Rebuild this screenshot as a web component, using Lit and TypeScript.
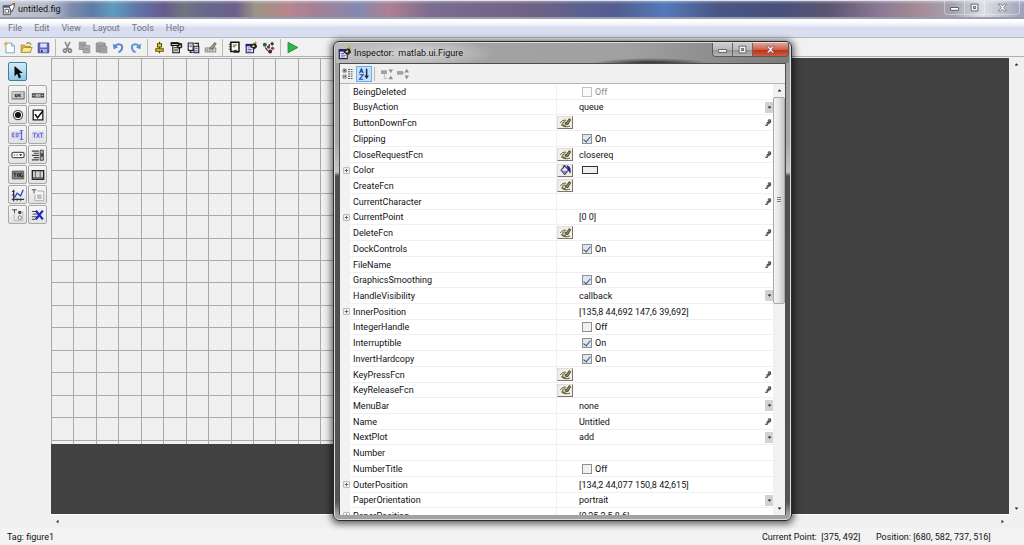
import { LitElement, html, svg, css, nothing, TemplateResult } from "lit";
import { customElement, property } from "lit/decorators.js";

type Kind = "check" | "choice" | "text" | "static" | "color" | "empty";

interface Prop {
  name: string;
  kind: Kind;
  value?: string;
  checked?: boolean;
  disabled?: boolean;
  expand?: boolean;
  button?: "pen" | "paint";
}

const PROPS: Prop[] = [
  { name: "BeingDeleted", kind: "check", checked: false, disabled: true },
  { name: "BusyAction", kind: "choice", value: "queue" },
  { name: "ButtonDownFcn", kind: "text", value: "", button: "pen" },
  { name: "Clipping", kind: "check", checked: true },
  { name: "CloseRequestFcn", kind: "text", value: "closereq", button: "pen" },
  { name: "Color", kind: "color", expand: true, button: "paint" },
  { name: "CreateFcn", kind: "text", value: "", button: "pen" },
  { name: "CurrentCharacter", kind: "text", value: "" },
  { name: "CurrentPoint", kind: "static", value: "[0 0]", expand: true },
  { name: "DeleteFcn", kind: "text", value: "", button: "pen" },
  { name: "DockControls", kind: "check", checked: true },
  { name: "FileName", kind: "text", value: "" },
  { name: "GraphicsSmoothing", kind: "check", checked: true },
  { name: "HandleVisibility", kind: "choice", value: "callback" },
  { name: "InnerPosition", kind: "static", value: "[135,8 44,692 147,6 39,692]", expand: true },
  { name: "IntegerHandle", kind: "check", checked: false },
  { name: "Interruptible", kind: "check", checked: true },
  { name: "InvertHardcopy", kind: "check", checked: true },
  { name: "KeyPressFcn", kind: "text", value: "", button: "pen" },
  { name: "KeyReleaseFcn", kind: "text", value: "", button: "pen" },
  { name: "MenuBar", kind: "choice", value: "none" },
  { name: "Name", kind: "text", value: "Untitled" },
  { name: "NextPlot", kind: "choice", value: "add" },
  { name: "Number", kind: "empty" },
  { name: "NumberTitle", kind: "check", checked: false },
  { name: "OuterPosition", kind: "static", value: "[134,2 44,077 150,8 42,615]", expand: true },
  { name: "PaperOrientation", kind: "choice", value: "portrait" },
  { name: "PaperPosition", kind: "static", value: "[0,25 2,5 8 6]", expand: true },
];

const inspectorGlyph = svg`
  <path d="M1.500 4.500h9v10h-9z" fill="#fff" stroke="#23235a" stroke-width="1.400"/>
  <path d="M1 3.500h8v3H1z" fill="#23236e"/>
  <path d="M3 8.500h4M3 10.500h6M3 12.500h5" stroke="#4a4a9c"/>
  <path d="M6 7l4-4 3-1 2 5-3 3-3-1z" fill="#222"/>
  <path d="M8 7l3-2.500 1 3z" fill="#f2e6a0"/>
  <path d="M11 3l2-3 2 3z" fill="#d8a800"/>`;

const ICONS: Record<string, TemplateResult> = {
  figure: svg`
    <path d="M1.500 4.500h8v10h-8z" fill="#e8ecf4" stroke="#3b3f52"/>
    <path d="M1 4h9v2.500H1z" fill="#4d557c"/>
    <path d="M3.500 8.500h4v4h-4z" fill="#fff" stroke="#555"/>
    <path d="M8 5l6-3.500v4l-3 6z" fill="#fff" stroke="#444"/>
    <path d="M12 1.500l3-.500-1 4z" fill="#b65a3a"/>`,
  newFile: svg`
    <path d="M3.500 2.500h7l3.500 3.500v8.500h-10.500z" fill="#fbfdff" stroke="#6e93bd"/>
    <path d="M10.500 2.500v3.500h3.500" fill="#d6e6f7" stroke="#6e93bd"/>
    <path d="M3.500 0l1 2.500L7 3.500 4.500 4.500l-1 2.500-1-2.500L0 3.500l2.500-1z" fill="#f0a646"/>`,
  open: svg`
    <path d="M1.500 14v-9h4l1 1.500h6.500V14z" fill="#e2be48" stroke="#a8842a"/>
    <path d="M1.500 14l2.500-6h11l-2.500 6z" fill="#fbe98c" stroke="#a8842a"/>
    <path d="M8 3.500c2-2.500 4.500-1.500 5.500 1" fill="none" stroke="#7d8f4b" stroke-width="1.500"/>`,
  save: svg`
    <path d="M1.500 2.500h13v12h-13z" fill="#6066c4" stroke="#34388c"/>
    <path d="M4 3h8v5H4z" fill="#dfe2f8"/>
    <path d="M4 10h8v4H4z" fill="#b8bce0"/><path d="M5 11h2v3H5z" fill="#2c307c"/>`,
  cut: svg`
    <path d="M5 1l4.500 9.500M11 1L6.500 10.500" stroke="#8d8d8d" stroke-width="2"/>
    <circle cx="5" cy="12" r="2" fill="none" stroke="#858585" stroke-width="2"/>
    <circle cx="11" cy="12" r="2" fill="none" stroke="#858585" stroke-width="2"/>`,
  copy: svg`
    <path d="M1.500 1.500h8v9h-8z" fill="#a9a9a9" stroke="#8a8a8a"/>
    <path d="M6.500 5.500h8v9h-8z" fill="#b4b4b4" stroke="#8a8a8a"/>
    <path d="M8 9h5M8 11h5M3 4h5M3 6h3" stroke="#8a8a8a"/>`,
  paste: svg`
    <path d="M1.500 2.500h11v11h-11z" fill="#999" stroke="#8a8a8a"/>
    <path d="M4 1h6v3H4z" fill="#a8a8a8"/>
    <path d="M6.500 6.500h8v8h-8z" fill="#a9a9a9" stroke="#8a8a8a"/><path d="M8 9h5M8 11h5" stroke="#8f8f8f"/>`,
  undo: svg`
    <path d="M3 7c4-5 10-3 9.500 1-.300 3-2 5-4.500 6" fill="none" stroke="#5b86d2" stroke-width="2.400"/>
    <path d="M1 3l1 7 5.500-2z" fill="#5b86d2"/>`,
  redo: svg`
    <path d="M13 7c-4-5-10-3-9.500 1 .300 3 2 5 4.500 6" fill="none" stroke="#5b93da" stroke-width="2.400"/>
    <path d="M15 3l-1 7-5.500-2z" fill="#5b93da"/>`,
  align: svg`
    <path d="M8 1v14" stroke="#4a4300" stroke-width="1.500"/>
    <path d="M5.500 3.500h5v4h-5zM3.500 9.500h9v3h-9z" fill="#f0d428" stroke="#5b5100" stroke-width="1.300"/>`,
  menuEditor: svg`
    <path d="M1.500 2.500h9v3h-9zM3.500 5.500h8v9h-8z" fill="#fff" stroke="#111" stroke-width="1.400"/>
    <path d="M1 1.500h9v2.500H1z" fill="#111"/>
    <path d="M5 8h5M5 10h5M5 12h5" stroke="#222"/>
    <path d="M8 7l3.500-5 3.500 1v5l-4 2z" fill="#222"/><path d="M10 7l3-2.500v3z" fill="#eee"/>`,
  tabOrder: svg`
    <path d="M1.500 2.500h6v9h-6z" fill="#fff" stroke="#222" stroke-width="1.400"/>
    <path d="M8.500 6.500h6v8h-6z" fill="#dfe4ff" stroke="#222" stroke-width="1.400"/>
    <path d="M3 5h3M3 7h3M10 9h3M10 12h3" stroke="#33338a"/>
    <path d="M9 3h5v3M4 12v2h3" fill="none" stroke="#222" stroke-width="1.500"/>`,
  toolbarEditor: svg`
    <path d="M1.500 8.500h13v5h-13z" fill="#d3d3c5" stroke="#777"/>
    <path d="M4 10v2M7 10v2M10 10v2" stroke="#555"/>
    <path d="M7 9l6-7 2 1-4 7z" fill="#9a987c" stroke="#66644c"/>`,
  mfile: svg`
    <path d="M3.500 1.500h10v11.500h-10z" fill="#fdf9e4" stroke="#111" stroke-width="1.800"/>
    <path d="M1 4h3M1 7h3M1 10h3" stroke="#111"/>
    <path d="M6 5h5M6 7h3" stroke="#444"/>
    <path d="M7 14c0-4 3-4 4-1.500l3 2H7z" fill="#222"/>`,
  inspector: inspectorGlyph,
  browser: svg`
    <circle cx="3.500" cy="4.500" r="2.500" fill="#1f6d3a"/><circle cx="10" cy="13" r="2.500" fill="#3a2a3a"/>
    <path d="M12.500 1l2.500 2.500L12.500 6 10 3.500z" fill="#1d4d2b"/><circle cx="13" cy="9" r="2" fill="#b02a58"/>
    <circle cx="8" cy="7.500" r="2" fill="#7a2a5a"/><path d="M4 8l3 4M9 4v2" stroke="#222" stroke-width="1.500"/>`,
  run: svg`<path d="M2.500 1.500l12 6.500-12 6.500z" fill="#35b24a" stroke="#1c8431"/>`,
  select: svg`<path d="M4 1v12l3-3 2 5 2.500-1-2-5h4z" fill="#0a0a0a"/>`,
  push: svg`
    <path d="M1 4h14v9H1z" fill="#d0d0d0"/><path d="M1 13V4h14" fill="none" stroke="#999"/>
    <path d="M1 12.500h14V4" fill="none" stroke="#555"/>
    <path d="M4 6.500h8v4H4z" fill="#aaa"/><path d="M5 7v3h2V7M9 7v3M11 7L9 8.500l2 1.500" fill="none" stroke="#222"/>`,
  slider: svg`
    <path d="M1 6h14v5H1z" fill="#4a4a4a"/><path d="M5 7h6v3H5z" fill="#b5b5b5"/>
    <path d="M2 8.500h2M12 8.500h2" stroke="#ddd"/>`,
  radio: svg`
    <circle cx="8" cy="8" r="5.300" fill="#fff" stroke="#555" stroke-width="1.300"/>
    <circle cx="8" cy="8" r="3.500" fill="#111"/>`,
  checkbox: svg`
    <path d="M2.500 2.500h11v11h-11z" fill="#fff" stroke="#222" stroke-width="1.500"/>
    <path d="M4.500 7l3 4L13.500 3.500" fill="none" stroke="#111" stroke-width="1.800"/>`,
  edit: svg`
    <path d="M0 4h13v8H0z" fill="#d5d5f2"/>
    <path d="M4 6H1.500v4H4M1.500 8h2M6 6v4h2V6zM9 6h4" fill="none" stroke="#6b6bc6"/>
    <path d="M10 3h4M12 3v10M10 13h4" stroke="#5151c4"/>`,
  text: svg`
    <path d="M1 4h14v8H1z" fill="#d5d5f2"/>
    <path d="M2 6h4M4 6v5M6.500 6l3 5M9.500 6l-3 5M10 6h4M12 6v5" stroke="#6666cc"/>`,
  popup: svg`
    <rect x="1" y="5" width="14" height="6" rx="2" fill="#fff" stroke="#555" stroke-width="1.400"/>
    <path d="M3 8h2M6 8h2" stroke="#555"/><path d="M9 7h4l-2 2.500z" fill="#222"/>`,
  listbox: svg`
    <path d="M1 3.500h8M3 6h6M1 8.500h8M3 11h6M1 13.500h8" stroke="#444" stroke-width="1.300"/>
    <path d="M10.500 2.500h3.500v11.500h-3.500z" fill="#bbb" stroke="#333"/><path d="M11 6h3v4h-3z" fill="#444"/>`,
  toggle: svg`
    <path d="M1.500 3.500h13v9h-13z" fill="#858585" stroke="#555"/>
    <path d="M3 6h3M4.500 6v4M7.500 6.500h2v3h-2zM13 6h-2v4h2V8" fill="none" stroke="#222"/>`,
  table: svg`
    <path d="M1.500 3h13v10h-13z" fill="#cfcfcf" stroke="#222" stroke-width="1.500"/>
    <path d="M5 3v10M10.500 3v10" stroke="#555"/><path d="M2 10.500h12v2H2z" fill="#666"/>`,
  axes: svg`
    <path d="M3 2v13M1 13h14" stroke="#333" stroke-width="1.500"/>
    <path d="M1 4h3M1 8h3M7 12v3M11 12v3" stroke="#333"/>
    <path d="M4 11l3-5 4 3 3-7" fill="none" stroke="#3a45c8" stroke-width="1.500"/>`,
  panel: svg`
    <path d="M7.500 3.500h7v11h-10v-7" fill="#f6f6f6" stroke="#a5a5a5"/>
    <path d="M1 2h5M3.500 2v4" stroke="#444"/><path d="M7.500 8h4v4h-4z" fill="#ddd" stroke="#aaa"/>
    <path d="M8 8.500l3 3" stroke="#999"/>`,
  buttonGroup: svg`
    <path d="M3.500 7v7.500h10v-11" fill="none" stroke="#b4b4b4"/>
    <path d="M1 2h6M4 2v4" stroke="#333"/>
    <circle cx="10" cy="5" r="2" fill="#444"/><circle cx="10" cy="11" r="2" fill="#fff" stroke="#666"/>`,
  activex: svg`
    <path d="M1 4h6M2 7h5M1 10h6M1 13h4" stroke="#333"/>
    <path d="M5.500 3l8 10M13.500 3L5.500 13" stroke="#1d23c4" stroke-width="2.600"/>`,
  category: svg`
    <path d="M1.500 1.500h4v4h-4zM1.500 9.500h4v4h-4z" fill="#fff" stroke="#555"/>
    <path d="M2 3.500h3M3.500 2v3M2 11.500h3" stroke="#333"/>
    <path d="M8 2h6M8 5h6M8 8h6M8 11h6M8 14h6" stroke="#555" stroke-width="1.300" stroke-dasharray="3 1"/>`,
  sort: svg`
    <path d="M2 7l2.500-6L7 7M3 5h3M2 9h5l-5 6h5" fill="none" stroke="#24489c" stroke-width="1.500"/>
    <path d="M11.500 1v11" stroke="#1c2b58" stroke-width="2"/><path d="M8.500 10h6l-3 5z" fill="#1c2b58"/>`,
  expandAll: svg`
    <path d="M0 3h8v5H0z" fill="#a2a2a2"/><path d="M4.500 8v6h4" fill="none" stroke="#aaa"/>
    <path d="M10 2h6l-3 5zM10 15h6l-3-5z" fill="#8f8f8f"/>`,
  collapseAll: svg`
    <path d="M0 4h8v5H0z" fill="#a2a2a2"/><path d="M8 6.500h2" stroke="#aaa"/>
    <path d="M10 6h6l-3-5zM10 10h6l-3 5z" fill="#8f8f8f"/>`,
  pen: svg`
    <path d="M1 4h14v10H1z" fill="#f7f5d6"/>
    <path d="M1 8c2-3 6-5 8-3M2 10c3 3 7 4 12 2" fill="none" stroke="#444" stroke-width="1.300"/>
    <circle cx="6.500" cy="9" r="2.500" fill="#d5d3ae" stroke="#2b2b2b"/>
    <path d="M8 9l5-7 2 1.500-4 7z" fill="#858755" stroke="#333"/>`,
  paint: svg`
    <path d="M2 8l5-5 5 5-5 6z" fill="#e9e9fb" stroke="#2b2b6d" stroke-width="1.400"/>
    <path d="M4 9h7l-4 4z" fill="#8286c6"/>
    <path d="M9 2c4 0 7 3 5.500 11L12 9z" fill="#23236d"/><path d="M5 6V2h3" fill="none" stroke="#333"/>`,
  pencil: svg`
    <path d="M3 11.500c1 2.500 4 1 5-2M8 3.500c2-3 6-2 5 1.500-.500 2-3 4-4.500 3.500M5 9l6-4.500" fill="none" stroke="#4c4c4c" stroke-width="2.600"/>`,
  down: svg`<path d="M2 5h12l-6 7z" fill="#222"/>`,
  up: svg`<path d="M2 11h12L8 4z" fill="#222"/>`,
  left: svg`<path d="M11 2v12L4 8z" fill="#222"/>`,
  right: svg`<path d="M5 2v12l7-6z" fill="#222"/>`,
  plus: svg`<path d="M1.500 1.500h13v13h-13z" fill="#fff" stroke="#aaa" stroke-width="2"/><path d="M4 8h8M8 4v8" stroke="#555" stroke-width="2"/>`,
  min: svg`<path d="M1 8h14v5H1z" fill="#fff" stroke="#4a4f5e" stroke-width="1.500"/>`,
  max: svg`<path d="M2 2h12v12H2zM6 6v4h4V6z" fill="#fff" fill-rule="evenodd" stroke="#4a4f5e" stroke-width="1.500"/>`,
  close: svg`<path d="M1 2h4l3 3.500L11 2h4l-5 6 5 6h-4L8 10.500 5 14H1l5-6z" fill="#fff" stroke="#55404a"/>`,
};

const icon = (name: string, cls = "") =>
  html`<svg class="icon ${cls}" viewBox="0 0 16 16" aria-hidden="true">${ICONS[name]}</svg>`;

const shared = css`
  * { box-sizing: border-box; }
  button, input, select { font: inherit; color: inherit; margin: 0; padding: 0; border: 0; background: none; border-radius: 0; outline-offset: -1px; }
  button { display: flex; align-items: center; justify-content: center; }
  .icon { width: 14px; height: 14px; display: block; flex: none; }
  .icon.tiny { width: 7px; height: 7px; }
  .icon.cap { width: 9px; height: 9px; }
  .icon.point { width: 5px; height: 5px; }
`;

@customElement("property-inspector")
export class PropertyInspector extends LitElement {
  @property({ attribute: false }) props: Prop[] = [];

  static styles = [shared, css`
    :host { display: flex; flex-direction: column; padding: 1px 5px 5px; border: 1px solid #2c2c2c; border-radius: 6px;
      background: linear-gradient(#b4b4b4, #a0a0a0 20px, #a8a8a8 100px, #c4c4c4 130px, #4d4d4d 134px, #555 460px, #a2a2a2 472px);
      box-shadow: inset 0 0 0 1px #dcdcdc, 0 1px 7px 2px rgba(0,0,0,.6); color: #111; }
    .caption { display: flex; align-items: center; height: 20px; flex: none; gap: 2px; margin: 0 -3px; padding-left: 2px;
      border-radius: 4px 4px 0 0;
      background: radial-gradient(ellipse 80px 14px at 80px 10px, #d4d4d4, #d4d4d400),
        radial-gradient(ellipse 60px 6px at 315px 21px, #3c3c3c 30%, #3c3c3c00),
        linear-gradient(90deg, #bcbcbc, #a2a2a2 150px, #a0a0a0 65%, #7c7c7c); }
    .title { margin: 0; font-size: 9px; font-weight: 400; flex: 1; white-space: pre; }
    .caps { display: flex; align-self: flex-start; height: 14px; border: 1px solid #595959; border-top: 0; border-radius: 0 0 4px 4px; overflow: hidden; }
    .caps button { width: 20px; border-right: 1px solid #666; background: linear-gradient(#ccc, #b9b9b9 50%, #949494 51%, #b5b5b5); }
    .caps .close { width: 35px; border: 0; background: linear-gradient(#e3a397, #d0604d 50%, #b9301a 51%, #cf5a3d); }
    .content { flex: 1; min-height: 0; display: flex; flex-direction: column; background: #fff; border: 1px solid #4c4c4c; border-bottom-width: 0; }
    .tools { display: flex; align-items: center; height: 20px; flex: none; background: #f0f0f0; border-bottom: 1px solid #b5b5b5; }
    .tools button { width: 16px; height: 16px; }
    .tools .active { background: #c3e0fb; border: 1px solid #6aaef0; }
    .tools .icon { width: 12px; height: 12px; }
    .sep { width: 1px; height: 14px; margin: 0 4px 0 2px; background: #b8b8b8; }
    .scroller { flex: 1; min-height: 0; display: flex; }
    .view { flex: 1; min-width: 0; overflow: hidden; }
    table { width: 100%; table-layout: fixed; border-collapse: separate; border-spacing: 0; font-size: 9px; line-height: 14px; }
    tr { height: 16px; }
    tr:nth-child(7n + 2), tr:nth-child(7n + 6) { height: 15px; }
    th, td { padding: 0; height: inherit; font-weight: 400; text-align: left; white-space: nowrap; border-bottom: 1px solid #f0f0f0; vertical-align: middle; }
    .gutter { width: 10px; background: #f2f2f2; border-bottom-color: #f2f2f2; }
    .gutter .icon { margin-left: 3px; }
    .name { width: 206px; padding-left: 3px; }
    .aux { width: 17px; border-left: 1px solid #f0f0f0; }
    .aux button { width: 16px; height: 13px; background: #f0efe6; border: 1px solid; border-color: #ddd #777 #777 #ddd; }
    .aux .icon { width: 13px; height: 12px; }
    .cell { display: flex; align-items: center; height: 14px; padding-left: 6px; }
    .cell input[type="text"] { flex: 1; min-width: 0; height: 14px; }
    .cell .icon { width: 8px; height: 8px; margin-right: 1px; }
    .choice { flex: 1; display: grid; grid-template-columns: 1fr 8px; align-items: center; }
    .choice select { grid-area: 1 / 1 / 2 / 3; appearance: none; height: 14px; }
    .choice .arrow { grid-area: 1 / 2; width: 8px; height: 11px; background: #d2d2d2; display: flex; align-items: center; justify-content: center; pointer-events: none; }
    .choice .arrow .icon { width: 5px; height: 5px; margin: 0; }
    .tick { display: flex; align-items: center; gap: 3px; padding-left: 3px; }
    .tick input { appearance: none; width: 10px; height: 10px; background: #f1f1f1; border: 1px solid #8e8f8f; display: grid; place-items: center; }
    .tick input:checked { background: #dfe5f0; }
    .tick input:checked::after { content: ""; width: 3px; height: 6px; border: solid #3a4f80; border-width: 0 1px 1px 0; rotate: 40deg; }
    .tick.off { color: #8d8d8d; }
    .tick.off input { border-color: #c2c2c2; background: #fbfbfb; }
    .swatch { width: 16px; height: 8px; margin-left: 3px; background: #f0f0f0; border: 1px solid #333; }
    .bar { width: 12px; flex: none; display: flex; flex-direction: column; align-items: center; justify-content: space-between; background: #f1f1f1; }
    .bar button { width: 12px; height: 13px; }
    .bar .thumb { height: 48%; width: 12px; margin-bottom: auto; border: 1px solid #a9a9a9; border-radius: 2px; background: linear-gradient(90deg, #f5f5f5, #e4e4e6 50%, #c4c4ca); }
    .grip { width: 4px; height: 6px; background: repeating-linear-gradient(#777 0 1px, #e8e8e8 1px 2px); }
  `];

  private value(p: Prop) {
    const id = `prop-${p.name}`;
    switch (p.kind) {
      case "check":
        return html`<label class="tick ${p.disabled ? "off" : ""}">
          <input type="checkbox" id=${id} .checked=${!!p.checked} ?disabled=${p.disabled}
            @change=${(e: Event) => { p.checked = (e.target as HTMLInputElement).checked; this.requestUpdate(); }}>
          ${p.checked ? "On" : "Off"}</label>`;
      case "choice":
        return html`<span class="choice"><select id=${id}><option>${p.value}</option></select>
          <span class="arrow">${icon("down")}</span></span>`;
      case "text":
        return html`<input type="text" id=${id} .value=${p.value ?? ""}>${icon("pencil")}`;
      case "color":
        return html`<span class="swatch"></span>`;
      case "static":
        return html`<span>${p.value}</span>`;
      default:
        return nothing;
    }
  }

  private row(p: Prop) {
    const control = p.kind === "check" || p.kind === "choice" || p.kind === "text";
    return html`<tr>
      <td class="gutter">${p.expand ? icon("plus", "tiny") : nothing}</td>
      <th class="name" scope="row">${control ? html`<label for="prop-${p.name}">${p.name}</label>` : p.name}</th>
      <td class="aux">${p.button ? html`<button aria-label="Edit ${p.name}">${icon(p.button)}</button>` : nothing}</td>
      <td><div class="cell">${this.value(p)}</div></td>
    </tr>`;
  }

  render() {
    return html`
      <header class="caption">
        ${icon("inspector")}
        <h2 class="title">Inspector:  matlab.ui.Figure</h2>
        <div class="caps">
          <button aria-label="Minimize">${icon("min", "cap")}</button>
          <button aria-label="Maximize">${icon("max", "cap")}</button>
          <button class="close" aria-label="Close">${icon("close", "cap")}</button>
        </div>
      </header>
      <div class="content">
        <div class="tools">
          <button aria-label="Group by category">${icon("category")}</button>
          <button class="active" aria-label="Sort alphabetically">${icon("sort")}</button>
          <span class="sep"></span>
          <button aria-label="Expand all">${icon("expandAll")}</button>
          <button aria-label="Collapse all">${icon("collapseAll")}</button>
        </div>
        <div class="scroller">
          <div class="view"><table><tbody>${this.props.map((p) => this.row(p))}</tbody></table></div>
          <div class="bar">
            <button aria-label="Scroll up">${icon("up", "point")}</button>
            <button class="thumb" aria-label="Scroll position"><span class="grip"></span></button>
            <button aria-label="Scroll down">${icon("down", "point")}</button>
          </div>
        </div>
      </div>`;
  }
}

const MENUS = ["File", "Edit", "View", "Layout", "Tools", "Help"];
const TOOLBAR: [string, string][][] = [
  [["newFile", "New"], ["open", "Open"], ["save", "Save"]],
  [["cut", "Cut"], ["copy", "Copy"], ["paste", "Paste"], ["undo", "Undo"], ["redo", "Redo"]],
  [["align", "Align Objects"], ["menuEditor", "Menu Editor"], ["tabOrder", "Tab Order Editor"], ["toolbarEditor", "Toolbar Editor"]],
  [["mfile", "Editor"], ["inspector", "Property Inspector"], ["browser", "Object Browser"]],
  [["run", "Run Figure"]],
];
const PALETTE: [string, string][] = [
  ["push", "Push Button"], ["slider", "Slider"], ["radio", "Radio Button"], ["checkbox", "Check Box"],
  ["edit", "Edit Text"], ["text", "Static Text"], ["popup", "Pop-up Menu"], ["listbox", "Listbox"],
  ["toggle", "Toggle Button"], ["table", "Table"], ["axes", "Axes"], ["panel", "Panel"],
  ["buttonGroup", "Button Group"], ["activex", "ActiveX Control"],
];
const FIGURE = { width: 552, height: 386, cells: 17 };
const gridLines = (extent: number) => {
  const step = FIGURE.height / (FIGURE.cells + 0.2);
  return Array.from({ length: Math.ceil(extent / step) }, (_, i) => Math.round(i * step));
};

@customElement("app-root")
export class AppRoot extends LitElement {
  static styles = [shared, css`
    :host { position: relative; display: flex; flex-direction: column; height: 100vh; overflow: hidden; background: #f0f0f0; color: #222;
      font: 9px/12px Roboto, "Open Sans", sans-serif; }
    .titlebar { display: flex; align-items: center; height: 19px; flex: none; gap: 2px; padding-left: 2px; border-top: 1px solid #dfe3ec; border-bottom: 2px solid #999db2;
      background: linear-gradient(#ffffff55, #ffffff00 3px), linear-gradient(90deg, #c3c6d3, #b4b9ca 5%, #7c8bab 7%, #5f7ba6 9%, #5d9dc0 11%, #6173a8 13.500%, #685a8e 16%, #6f7480 18%, #67698a 20%, #6c5f8c 23%, #9b9684 25%, #b8868e 28%, #a47f98 31%, #828ab0 35%, #b07f92 38%, #7b6c90 42%, #6f6284 52%, #5b6190 57%, #525d90 60%, #5478ba 65%, #4b5684 70%, #48507a 76%, #5b5672 81%, #8b7a94 86%, #a98c96 90%, #a3a3b0 93%, #dedee4 96%, #9aa1ba); }
    .name { flex: 1; margin: 0; font-size: 9px; font-weight: 400; color: #111; }
    .caps { display: flex; align-self: flex-start; height: 14px; margin-right: 4px; border: 1px solid #ffffff66; border-top: 0; border-radius: 0 0 4px 4px; }
    .caps button { width: 20px; border-right: 1px solid #ffffff66; }
    .caps .close { width: 34px; border: 0; }
    .menubar { display: flex; height: 19px; flex: none; padding-left: 2px; align-items: center; background: linear-gradient(#fff 2px, #edf0f8 6px, #d7dcef 9px, #dbe0f1); border-bottom: 1px solid #b3b7c6; }
    .menubar button { padding: 0 6px; color: #73757f; }
    .toolbar { display: flex; align-items: center; height: 19px; flex: none; padding: 0 1px; background: #f1f1f1; border-bottom: 1px solid #b0b0b0; }
    .group { display: flex; }
    .group + .group { margin-left: 3px; padding-left: 3px; border-left: 1px solid #b9b9b9; }
    .toolbar button { width: 17px; height: 17px; }
    .toolbar .icon { width: 13px; height: 13px; }
    .body { flex: 1; min-height: 0; display: grid; grid-template-columns: 51px 1fr 15px; grid-template-rows: 1fr 13px; padding-top: 1px; }
    .palette { grid-row: 1 / 3; padding: 4px 0 0 8px; display: flex; flex-direction: column; gap: 4px; }
    .palette button { width: 19px; height: 19px; background: linear-gradient(#f7f7f7, #e2e2e2); border: 1px solid #a9a9a9; border-radius: 2px; }
    .palette .active { background: linear-gradient(#d3ecf8, #8fc9e6); border-color: #3f7f9f; }
    .kinds { display: grid; grid-template-columns: 19px 19px; gap: 1px; grid-auto-rows: 19px; }
    .stage { background: #414141; overflow: hidden; border-bottom: 1px solid #fff; }
    .figure { display: block; background: #f0f0f0; }
    .vbar, .hbar { display: flex; justify-content: space-between; align-items: center; background: #f0f0f0; }
    .vbar { flex-direction: column; padding: 2px 0; }
    .hbar { padding: 0 2px; }
    .vbar button, .hbar button { width: 9px; height: 9px; }
    .vbar .icon, .hbar .icon { width: 5px; height: 5px; }
    .status { display: flex; align-items: center; height: 17px; flex: none; padding: 0 7px; background: #f3f3f3; white-space: pre; color: #111; }
    .status .tag { flex: 1; }
    .status .point { width: 114px; }
    .status .pos { width: 141px; }
    .inspector { position: absolute; left: 333px; top: 41px; width: 459px; height: 480px; }
  `];

  render() {
    return html`
      <header class="titlebar">
        ${icon("figure")}
        <h1 class="name">untitled.fig</h1>
        <div class="caps">
          <button aria-label="Minimize">${icon("min", "cap")}</button>
          <button aria-label="Maximize">${icon("max", "cap")}</button>
          <button class="close" aria-label="Close">${icon("close", "cap")}</button>
        </div>
      </header>
      <nav class="menubar">${MENUS.map((m) => html`<button>${m}</button>`)}</nav>
      <div class="toolbar">
        ${TOOLBAR.map((g) => html`<div class="group">${g.map(([i, label]) => html`<button aria-label=${label}>${icon(i)}</button>`)}</div>`)}
      </div>
      <main class="body">
        <div class="palette">
          <button class="active" aria-label="Select">${icon("select")}</button>
          <div class="kinds">${PALETTE.map(([i, label]) => html`<button aria-label=${label}>${icon(i)}</button>`)}</div>
        </div>
        <div class="stage">
          <svg class="figure" width=${FIGURE.width} height=${FIGURE.height} shape-rendering="crispEdges">
            ${gridLines(FIGURE.width).map((x) => svg`<rect x=${x} y="0" width="1" height=${FIGURE.height} fill="#a9a9a9"/>`)}
            ${gridLines(FIGURE.height).map((y) => svg`<rect x="0" y=${y} width=${FIGURE.width} height="1" fill="#a9a9a9"/>`)}
          </svg>
        </div>
        <div class="vbar">
          <button aria-label="Scroll up">${icon("up")}</button>
          <button aria-label="Scroll down">${icon("down")}</button>
        </div>
        <div class="hbar">
          <button aria-label="Scroll left">${icon("left")}</button>
          <button aria-label="Scroll right">${icon("right")}</button>
        </div>
      </main>
      <footer class="status">
        <span class="tag">Tag: figure1</span>
        <span class="point">Current Point:  [375, 492]</span>
        <span class="pos">Position: [680, 582, 737, 516]</span>
      </footer>
      <property-inspector class="inspector" .props=${PROPS}></property-inspector>`;
  }
}
